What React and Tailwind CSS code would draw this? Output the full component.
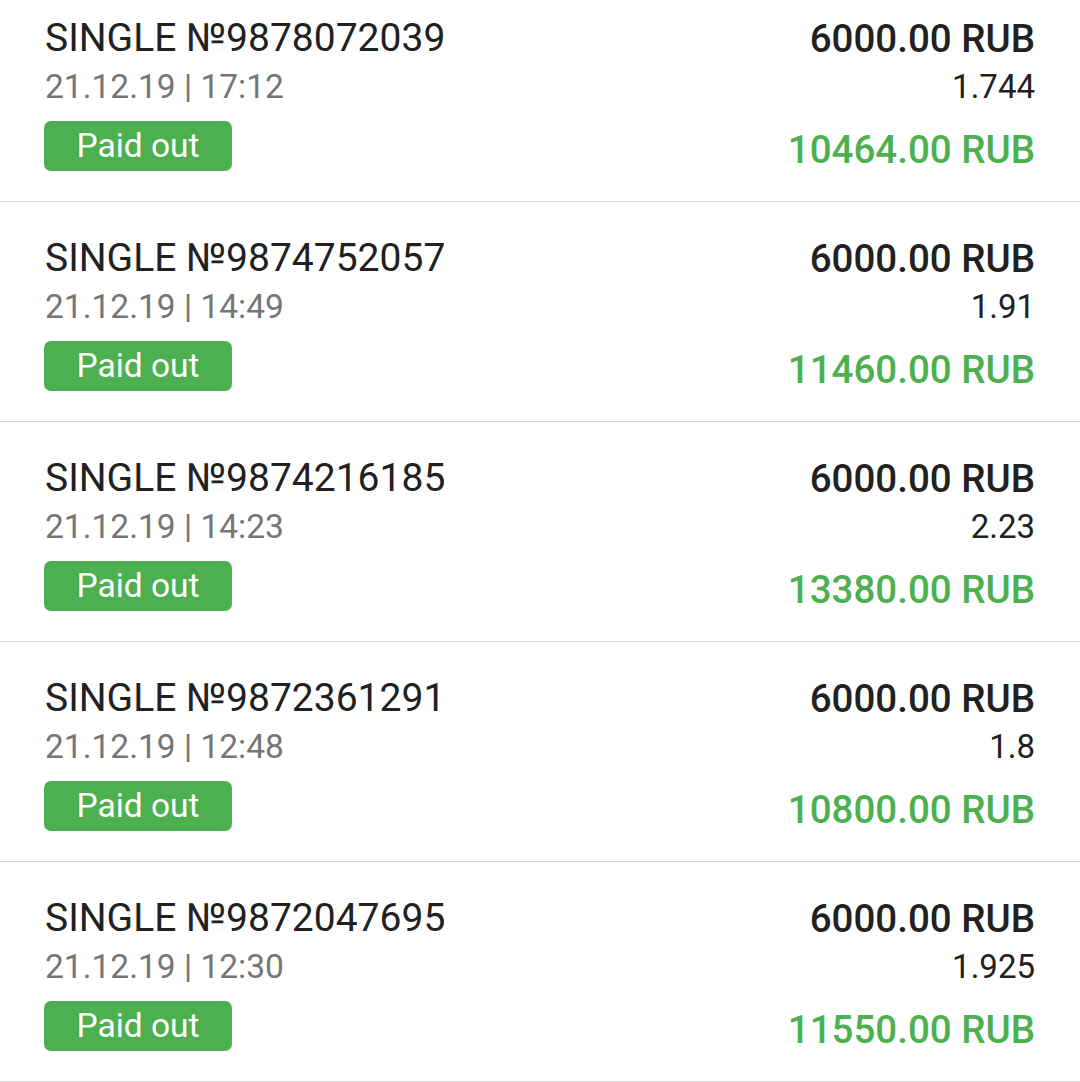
import React from "react";

const rows = [
  { id: "9878072039", date: "21.12.19 | 17:12", odds: "1.744", win: "10464.00 RUB" },
  { id: "9874752057", date: "21.12.19 | 14:49", odds: "1.91", win: "11460.00 RUB" },
  { id: "9874216185", date: "21.12.19 | 14:23", odds: "2.23", win: "13380.00 RUB" },
  { id: "9872361291", date: "21.12.19 | 12:48", odds: "1.8", win: "10800.00 RUB" },
  { id: "9872047695", date: "21.12.19 | 12:30", odds: "1.925", win: "11550.00 RUB" },
];

export default function App() {
  return (
    <div className="w-[1080px] h-[1082px] overflow-hidden bg-white" style={{ fontFamily: "Roboto, 'Noto Sans', sans-serif" }}>
      <div className="-mt-[18px]">
        {rows.map((r) => (
          <div key={r.id} className="h-[220px] border-b border-[#d6d6d6] flex justify-between pl-[44px] pr-[45px]">
            <div className="flex flex-col items-start pt-[33px]">
              <div className="pl-px text-[39px] leading-[46px] text-[#212121]">SINGLE №{r.id}</div>
              <div className="mt-[6px] pl-px text-[33.5px] leading-[40px] text-[#767676]">{r.date}</div>
              <div className="mt-[14px] h-[50px] w-[188px] rounded-[7px] bg-[#4caf50] flex items-center justify-center text-[33.5px] leading-none text-white">
                Paid out
              </div>
            </div>
            <div className="flex flex-col items-end pt-[34px]">
              <div className="text-[38.5px] leading-[46px] font-medium text-[#212121]">6000.00 RUB</div>
              <div className="mt-[5px] text-[33px] leading-[40px] text-[#212121]">{r.odds}</div>
              <div className="mt-[20px] text-[38.5px] leading-[46px] font-medium text-[#4caf50]">{r.win}</div>
            </div>
          </div>
        ))}
      </div>
    </div>
  );
}
